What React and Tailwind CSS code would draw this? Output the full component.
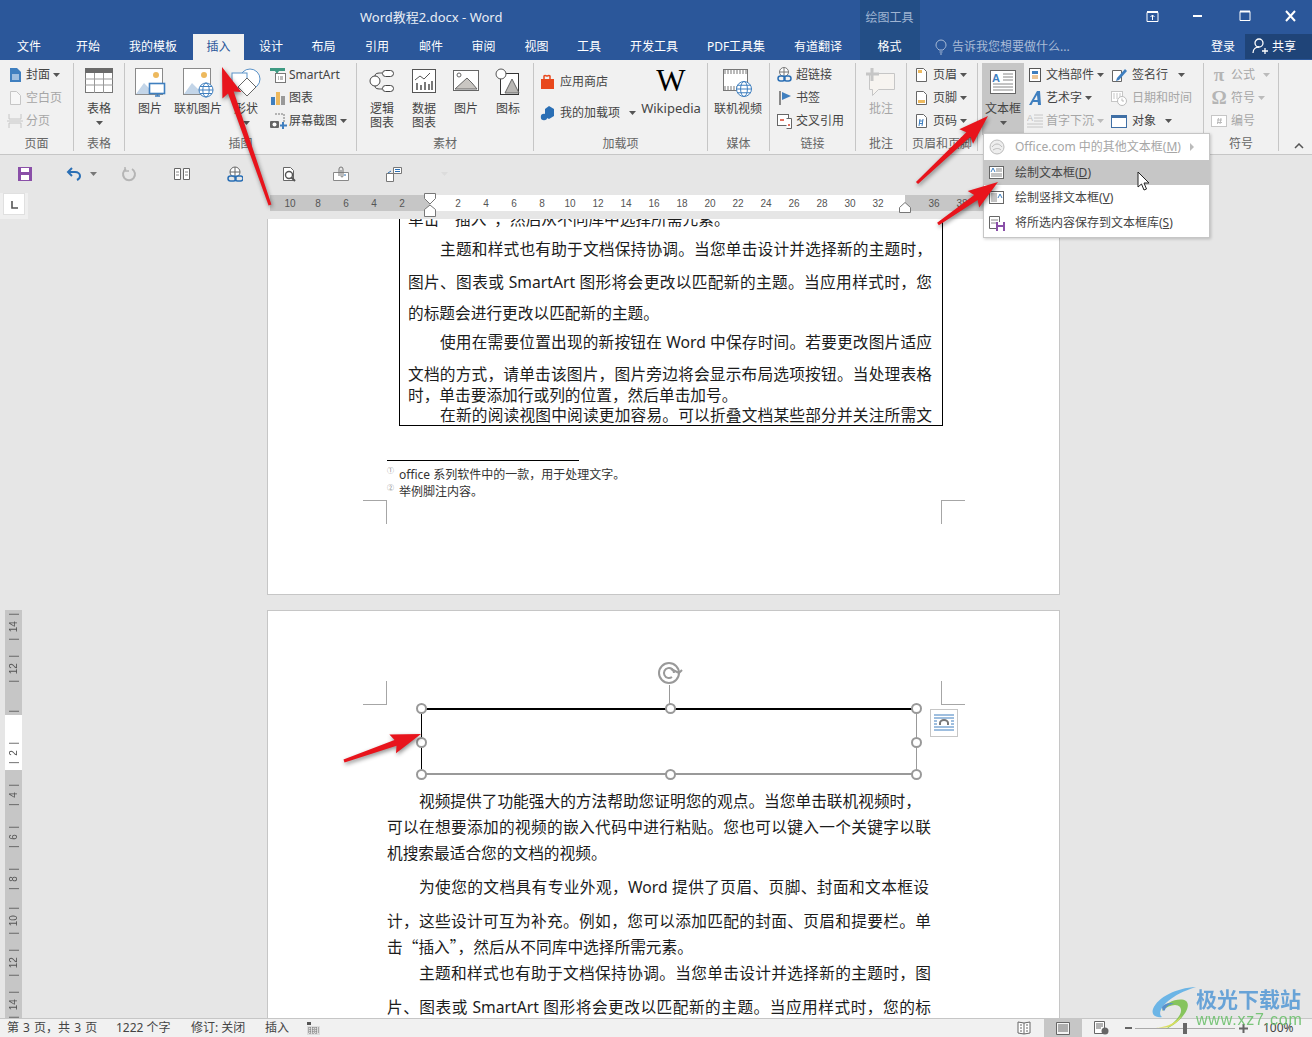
import React from "react";

const Ic = ({ w = 16, h = 16, children, className = "" }) => (
  <svg width={w} height={h} viewBox={`0 0 ${w} ${h}`} fill="none" className={`block shrink-0 ${className}`}>
    {children}
  </svg>
);

const Caret = ({ className = "", color = "#555" }) => (
  <svg width="7" height="4" viewBox="0 0 7 4" className={`block shrink-0 ${className}`}>
    <path d="M0 0h7L3.5 4z" fill={color} />
  </svg>
);

const Globe = ({ x, y, r = 7 }) => (
  <g stroke="#3f7fbf" strokeWidth="1" fill="#fff">
    <circle cx={x} cy={y} r={r} />
    <ellipse cx={x} cy={y} rx={r / 2.2} ry={r} fill="none" />
    <path d={`M${x - r} ${y}h${r * 2}M${x - r + 1} ${y - r / 2}h${r * 2 - 2}M${x - r + 1} ${y + r / 2}h${r * 2 - 2}`} />
  </g>
);

const Landscape = () => (
  <g>
    <rect x="0.5" y="0.5" width="27" height="26" fill="#fff" stroke="#8a8a8a" />
    <circle cx="21" cy="7" r="3" fill="#edb95e" />
    <path d="M1 26l8-11 6 6 3-2 6 7z" fill="#c3d5e8" />
  </g>
);

const IconCover = () => (
  <Ic><path d="M3 1h7l4 4v10H3z" fill="#3f7fbf" /><path d="M5 8h7M5 10h7M5 12h7" stroke="#fff" /></Ic>
);
const IconBlank = () => (
  <Ic><path d="M3.5 1.5h6l4 4v9h-10z" stroke="#c6c6c6" fill="#f7f7f7" /></Ic>
);
const IconBreak = () => (
  <Ic w={16}><path d="M2 1v5h12V1M2 15v-5h12v5M0 8h16" stroke="#c6c6c6" /></Ic>
);
const IconTable = () => (
  <Ic w={28} h={25}>
    <rect x="0.5" y="0.5" width="27" height="24" fill="#fff" stroke="#777" />
    <rect x="0" y="0" width="28" height="5" fill="#6a6a6a" />
    <path d="M0 11h28M0 17h28M9.5 5v20M18.5 5v20" stroke="#999" />
  </Ic>
);
const IconPic = () => (
  <Ic w={31} h={30}>
    <Landscape />
    <rect x="14.5" y="15.5" width="15" height="10" fill="#fff" stroke="#3f7fbf" strokeWidth="1.6" />
    <path d="M20 28h5M22.5 26v2" stroke="#3f7fbf" strokeWidth="1.5" />
  </Ic>
);
const IconOnlinePic = () => (
  <Ic w={31} h={30}><Landscape /><Globe x={23} y={22} r={7} /></Ic>
);
const IconShape = () => (
  <Ic w={30} h={30}>
    <circle cx="19" cy="11" r="10" fill="#fff" stroke="#5b93c9" />
    <rect x="1" y="5" width="15" height="15" fill="#fff" stroke="#5b93c9" />
    <path d="M16 10l9 9-9 9-9-9z" fill="#fff" stroke="#666" />
  </Ic>
);
const IconSmartArt = () => (
  <Ic>
    <path d="M0 1h15v3H9l-2 3-2-3H0z" fill="#3e9a82" />
    <rect x="5.5" y="6.5" width="10" height="9" fill="#fff" stroke="#777" />
    <path d="M8 10h1M8 12h1M10 10h3M10 12h3" stroke="#777" />
  </Ic>
);
const IconChart = () => (
  <Ic><path d="M1 7h4v8H1z" fill="#3f7fbf" /><path d="M6 2h4v13H6z" fill="#edb95e" /><path d="M11 6h4v9h-4z" fill="#999" /></Ic>
);
const IconShot = () => (
  <Ic w={17}>
    <path d="M5 1h9v8" stroke="#777" strokeDasharray="2 1" />
    <rect x="0" y="8" width="9" height="7" rx="1" fill="#666" />
    <circle cx="4.5" cy="11.5" r="2" fill="#fff" />
    <path d="M13 9v7M10 12.5h7" stroke="#3f7fbf" strokeWidth="2" />
  </Ic>
);
const IconLogic = () => (
  <Ic w={26} h={26}>
    <circle cx="6" cy="13" r="5" fill="#fff" stroke="#444" />
    <rect x="13.5" y="2.5" width="11" height="6" rx="3" fill="#fff" stroke="#444" />
    <rect x="13.5" y="17.5" width="11" height="6" rx="3" fill="#fff" stroke="#444" />
    <path d="M6 8c0-3 3-3 7-3M6 18c0 3 3 3 7 3" stroke="#444" />
  </Ic>
);
const IconData = () => (
  <Ic w={24} h={26}>
    <rect x="0.5" y="1.5" width="23" height="23" fill="#fff" stroke="#555" />
    <path d="M3 12l5-4 4 3 6-6" stroke="#555" />
    <path d="M5 22v-7M9 22v-5M13 22v-8M17 22v-6M20 22v-9" stroke="#333" strokeWidth="1.3" />
  </Ic>
);
const IconPicture = () => (
  <Ic w={26} h={26}>
    <rect x="0.5" y="2.5" width="25" height="20" fill="#fff" stroke="#666" strokeWidth="1" />
    <circle cx="6" cy="7" r="2" stroke="#666" fill="#fff" />
    <path d="M2 21l12-11 5 5 5 6z" fill="#c9c6c2" stroke="#666" />
  </Ic>
);
const IconSymbol = () => (
  <Ic w={26} h={28}>
    <rect x="5.5" y="5.5" width="18" height="21" fill="#fff" stroke="#333" />
    <circle cx="6" cy="6" r="5" fill="#fff" stroke="#555" />
    <path d="M17 11l7 14H10z" fill="#b9b7b4" stroke="#666" />
  </Ic>
);
const IconStore = () => (
  <Ic>
    <path d="M1 5h13v10H1z" fill="#e8481c" />
    <path d="M4 5V2c1-1 2 0 3 0s2-1 3 0v3" stroke="#e8481c" strokeWidth="1.5" />
  </Ic>
);
const IconAddin = () => (
  <Ic>
    <path d="M9 1l5 3v7l-5 3-4-2V4z" fill="#2a6fb5" />
    <circle cx="4" cy="12" r="3.2" fill="#2a6fb5" />
  </Ic>
);
const IconVideo = () => (
  <Ic w={30} h={30}>
    <rect x="0.5" y="1.5" width="24" height="21" fill="#fff" stroke="#777" />
    <path d="M1 3h23M1 5h23M1 19h23M1 21h23" stroke="#777" strokeDasharray="2 1" />
    <Globe x={21} y={21} r={7.5} />
  </Ic>
);
const IconLink = () => (
  <Ic>
    <circle cx="7" cy="5" r="4.5" fill="#fff" stroke="#777" />
    <path d="M3 5h8M7 1v8" stroke="#777" />
    <rect x="1" y="9" width="7" height="5" rx="2.5" stroke="#2a6fb5" strokeWidth="1.5" />
    <rect x="7" y="9" width="7" height="5" rx="2.5" stroke="#2a6fb5" strokeWidth="1.5" />
  </Ic>
);
const IconBookmark = () => (
  <Ic><path d="M3 1v14" stroke="#666" strokeWidth="1.5" /><path d="M5 2l9 4-9 4z" fill="#3f7fbf" /></Ic>
);
const IconCross = () => (
  <Ic>
    <rect x="0.5" y="1.5" width="11" height="11" fill="#fff" stroke="#666" />
    <path d="M3 7h4" stroke="#d9432c" strokeWidth="1.5" />
    <path d="M9.5 5.5h5v10h-5" fill="#fff" stroke="#666" />
    <path d="M11 12h2" stroke="#d9432c" strokeWidth="1.5" />
  </Ic>
);
const IconComment = () => (
  <Ic w={30} h={30}>
    <path d="M3.5 5.5h25v16h-16l-6 6v-6h-3z" fill="#f7f4f0" stroke="#c6c6c6" />
    <path d="M6 0v13M0 6h13" stroke="#c6c6c6" strokeWidth="3" />
  </Ic>
);
const IconHeader = () => (
  <Ic><path d="M3.5 1.5h7l3 3v10h-10z" fill="#fff" stroke="#666" /><path d="M5 3h4v3H5z" fill="#edb95e" /></Ic>
);
const IconFooter = () => (
  <Ic><path d="M3.5 1.5h7l3 3v10h-10z" fill="#fff" stroke="#666" /><path d="M5 10h7v3H5z" fill="#edb95e" /></Ic>
);
const IconPageNo = () => (
  <Ic>
    <path d="M3.5 1.5h7l3 3v10h-10z" fill="#fff" stroke="#666" />
    <path d="M6 8h4M6 10.5h4M7 6l-1 7M10 6l-1 7" stroke="#3f7fbf" />
  </Ic>
);
const IconTextbox = () => (
  <Ic w={30} h={28}>
    <rect x="2.5" y="2.5" width="25" height="23" fill="#fff" stroke="#666" />
    <path d="M15 6h10M15 9h10M15 12h10M5 16h20M5 19h20M5 22h20" stroke="#888" />
    <text x="4" y="14" fontSize="11" fontWeight="700" fill="#3f7fbf" fontFamily="Liberation Sans">A</text>
  </Ic>
);
const IconParts = () => (
  <Ic>
    <rect x="2.5" y="1.5" width="11" height="13" fill="#fff" stroke="#555" />
    <rect x="5" y="4" width="6" height="3" fill="#3f7fbf" />
    <path d="M5 9h6M5 11h6" stroke="#d88b2f" />
  </Ic>
);
const IconWordArt = () => (
  <Ic><path d="M2 15L10 1h3l1 14h-3l-.3-3H6l-1.5 3zM7 10h3.5L10 5z" fill="#3f7fbf" /></Ic>
);
const IconDropCap = () => (
  <Ic>
    <text x="0" y="8" fontSize="9" fill="#bbb" fontFamily="Liberation Sans">A</text>
    <path d="M7 2h9M7 5h9M7 8h9M0 11h16M0 14h16" stroke="#c6c6c6" />
  </Ic>
);
const IconSign = () => (
  <Ic>
    <path d="M1.5 3.5h9v11h-9z" fill="#fff" stroke="#666" />
    <path d="M6 11l8-9 2 2-8 9-3 1z" fill="#3f7fbf" />
  </Ic>
);
const IconDate = () => (
  <Ic>
    <rect x="0.5" y="1.5" width="11" height="10" fill="#fff" stroke="#c6c6c6" />
    <path d="M2 4h8M2 6h8M2 8h8" stroke="#c6c6c6" strokeDasharray="2 1" />
    <circle cx="11" cy="11" r="4.5" fill="#fff" stroke="#bbb" />
    <path d="M11 8.5V11h2" stroke="#bbb" />
  </Ic>
);
const IconObject = () => (
  <Ic><rect x="0.5" y="2.5" width="15" height="12" fill="#fff" stroke="#3f6fa5" /><path d="M0 2h16v3H0z" fill="#3f6fa5" /></Ic>
);
const IconNumber = () => (
  <Ic><rect x="0.5" y="2.5" width="15" height="11" fill="#fff" stroke="#c6c6c6" /><path d="M6 7h5M6 9.5h5M7.5 5L6.5 11M10 5L9 11" stroke="#bbb" /></Ic>
);
const Glyph = ({ children }) => (
  <span className="block w-4 text-center text-[19px] leading-4 font-bold text-[#b5b5b5] font-['Liberation_Serif',serif]">{children}</span>
);

const Group = ({ w, label, children }) => (
  <div className={`${w} mt-[3px] h-[88px] shrink-0 flex flex-col border-r border-[#c6c6c6]`}>
    <div className="h-[72px] flex">{children}</div>
    <div className="h-[16px] leading-[18px] text-center text-[12px] text-[#666]">{label}</div>
  </div>
);

const Large = ({ icon, lines, caret, w, off }) => (
  <div className={`${w} shrink-0 flex flex-col items-center pt-[5px] ${off ? "text-[#a6a6a6]" : "text-[#444]"}`}>
    <div className="h-[30px] flex items-start justify-center">{icon}</div>
    <div className="mt-[4px] text-center text-[12px] leading-[14px] whitespace-nowrap">
      {lines.map((l) => <div key={l}>{l}</div>)}
    </div>
    {caret && <div className="h-[13px] flex items-center"><Caret /></div>}
  </div>
);

const Row = ({ icon, label, pad, gap = "ml-[3px]", caret, off, h = "h-[23px]" }) => (
  <div className={`${h} ${pad} flex items-center whitespace-nowrap text-[12px] ${off ? "text-[#a6a6a6]" : "text-[#444]"}`}>
    {icon}
    <span className={gap}>{label}</span>
    {caret && <Caret className={caret} color={off ? "#bbb" : "#555"} />}
  </div>
);

const tabs = [
  ["文件", "w-[58px]"], ["开始", "w-[60px]"], ["我的模板", "w-[75px] pr-[5px]"], ["插入", "w-[51px]"], ["设计", "w-[54px]"],
  ["布局", "w-[52px] pr-[1px]"], ["引用", "w-[54px]"], ["邮件", "w-[54px]"], ["审阅", "w-[52px] pr-[1px]"], ["视图", "w-[53px]"],
  ["工具", "w-[53px] pr-[1px]"], ["开发工具", "w-[77px] pr-[1px]"], ["PDF工具集", "w-[87px] pr-[1px]"], ["有道翻译", "w-[80px] pr-[4px]"],
];

const HeaderBar = () => (
  <div className="h-[60px] shrink-0 bg-[#2b579a] flex text-white">
    <div className="w-[860px] shrink-0 flex flex-col">
      <div className="h-[34px] pl-[360px] pt-[8px] text-[13px] leading-[18px] text-[#e8edf5] whitespace-nowrap">Word教程2.docx - Word</div>
      <div className="h-[26px] flex text-[12px] leading-[26px] text-center">
        {tabs.map(([t, w]) => (
          <div key={t} className={`${w} shrink-0 whitespace-nowrap ${t === "插入" ? "bg-[#f1f1f1] text-[#2b579a]" : ""}`}>{t}</div>
        ))}
      </div>
    </div>
    <div className="w-[60px] shrink-0 bg-[#234e86] flex flex-col text-center">
      <div className="h-[34px] pt-[9px] pr-[1px] text-[12px] leading-[18px] text-[#9fb4d2]">绘图工具</div>
      <div className="h-[26px] pr-[1px] text-[12px] leading-[26px]">格式</div>
    </div>
    <div className="flex-1 flex flex-col">
      <div className="h-[34px] flex items-start pt-[8px]">
        <svg width="16" height="16" viewBox="0 0 16 16" className="ml-[224px] block shrink-0" fill="none" stroke="#fff">
          <path d="M3 4.5h11v9H3zM8.5 12V7M6.5 9l2-2 2 2" strokeWidth="1" />
          <path d="M3 4h11" strokeWidth="2" />
        </svg>
        <svg width="10" height="16" viewBox="0 0 10 16" className="ml-[33px] block shrink-0"><path d="M0 8h9" stroke="#fff" strokeWidth="2" /></svg>
        <svg width="12" height="16" viewBox="0 0 12 16" className="ml-[36px] block shrink-0" fill="none" stroke="#fff"><path d="M1 3.5h10v9H1z" /><path d="M1 3.5h10" strokeWidth="2" /></svg>
        <svg width="12" height="16" viewBox="0 0 12 16" className="ml-[34px] block shrink-0" stroke="#fff" strokeWidth="2"><path d="M1 3l9 10M10 3l-9 10" /></svg>
      </div>
      <div className="h-[26px] flex items-center text-[12px]">
        <svg width="12" height="16" viewBox="0 0 12 16" className="ml-[15px] block shrink-0" fill="none" stroke="#a9bbd6"><path d="M4 11C2 9 1 8 1 6a5 5 0 0 1 10 0c0 2-1 3-3 5zM4.5 13h3M5 15h2" /></svg>
        <span className="ml-[5px] w-[271px] shrink-0 text-[#a9bbd6] whitespace-nowrap">告诉我您想要做什么...</span>
      </div>
    </div>
  </div>
);

const Ribbon = () => (
  <div className="h-[95px] shrink-0 bg-[#f1f1f1] border-b border-[#c6c6c6] flex">
    <Group w="w-[74px]" label="页面">
      <div>
        <Row icon={<IconCover />} label="封面" pad="pl-[7px]" caret="ml-[3px]" />
        <Row icon={<IconBlank />} label="空白页" pad="pl-[7px]" off />
        <Row icon={<IconBreak />} label="分页" pad="pl-[7px]" off />
      </div>
    </Group>
    <Group w="w-[51px]" label="表格">
      <Large w="w-full" icon={<IconTable />} lines={["表格"]} caret />
    </Group>
    <Group w="w-[232px]" label="插图">
      <div className="pl-[1px] flex">
        <Large w="w-[48px]" icon={<IconPic />} lines={["图片"]} />
        <Large w="w-[48px]" icon={<IconOnlinePic />} lines={["联机图片"]} />
        <Large w="w-[48px]" icon={<IconShape />} lines={["形状"]} caret />
        <div>
          <Row icon={<IconSmartArt />} label="SmartArt" />
          <Row icon={<IconChart />} label="图表" />
          <Row icon={<IconShot />} label="屏幕截图" caret="ml-[3px]" gap="ml-[2px]" />
        </div>
      </div>
    </Group>
    <Group w="w-[177px]" label="素材">
      <Large w="w-[50px]" icon={<IconLogic />} lines={["逻辑", "图表"]} />
      <Large w="w-[34px]" icon={<IconData />} lines={["数据", "图表"]} />
      <div className="w-[4px]" />
      <Large w="w-[42px]" icon={<IconPicture />} lines={["图片"]} />
      <Large w="w-[42px]" icon={<IconSymbol />} lines={["图标"]} />
    </Group>
    <Group w="w-[174px]" label="加载项">
      <div className="w-[103px] pt-[4px] shrink-0">
        <Row h="h-[30px]" icon={<IconStore />} label="应用商店" pad="pl-[6px]" gap="ml-[4px]" />
        <Row h="h-[32px]" icon={<IconAddin />} label="我的加载项" pad="pl-[6px]" gap="ml-[4px]" caret="ml-[9px]" />
      </div>
      <div className="w-[68px] shrink-0 flex flex-col items-center text-[#444]">
        <div className="h-[35px] pt-[1px] text-[31px] leading-[34px] text-black font-['Liberation_Serif',serif]">W</div>
        <div className="text-[13px] leading-[20px]">Wikipedia</div>
      </div>
    </Group>
    <Group w="w-[62px]" label="媒体">
      <Large w="w-[60px]" icon={<IconVideo />} lines={["联机视频"]} />
    </Group>
    <Group w="w-[86px]" label="链接">
      <div>
        <Row icon={<IconLink />} label="超链接" pad="pl-[7px]" />
        <Row icon={<IconBookmark />} label="书签" pad="pl-[7px]" />
        <Row icon={<IconCross />} label="交叉引用" pad="pl-[7px]" />
      </div>
    </Group>
    <Group w="w-[51px]" label="批注">
      <Large w="w-full" icon={<IconComment />} lines={["批注"]} off />
    </Group>
    <Group w="w-[71px]" label="页眉和页脚">
      <div>
        <Row icon={<IconHeader />} label="页眉" pad="pl-[6px]" gap="ml-[4px]" caret="ml-[3px]" />
        <Row icon={<IconFooter />} label="页脚" pad="pl-[6px]" gap="ml-[4px]" caret="ml-[3px]" />
        <Row icon={<IconPageNo />} label="页码" pad="pl-[6px]" gap="ml-[4px]" caret="ml-[3px]" />
      </div>
    </Group>
    <Group w="w-[226px]" label="文本">
      <div className="ml-[4px] w-[42px] h-[72px] shrink-0 bg-[#c6c6c6]">
        <Large w="w-full" icon={<IconTextbox />} lines={["文本框"]} caret />
      </div>
      <div className="w-[87px] shrink-0">
        <Row icon={<IconParts />} label="文档部件" pad="pl-[3px]" caret="ml-[3px]" />
        <Row icon={<IconWordArt />} label="艺术字" pad="pl-[3px]" caret="ml-[3px]" />
        <Row icon={<IconDropCap />} label="首字下沉" pad="pl-[3px]" caret="ml-[3px]" off />
      </div>
      <div>
        <Row icon={<IconSign />} label="签名行" gap="ml-[5px]" caret="ml-[10px]" />
        <Row icon={<IconDate />} label="日期和时间" gap="ml-[5px]" off />
        <Row icon={<IconObject />} label="对象" gap="ml-[5px]" caret="ml-[9px]" />
      </div>
    </Group>
    <Group w="w-[75px]" label="符号">
      <div>
        <Row icon={<Glyph>π</Glyph>} label="公式" pad="pl-[7px]" gap="ml-[4px]" caret="ml-[8px]" off />
        <Row icon={<Glyph>Ω</Glyph>} label="符号" pad="pl-[7px]" gap="ml-[4px]" caret="ml-[3px]" off />
        <Row icon={<IconNumber />} label="编号" pad="pl-[7px]" gap="ml-[4px]" off />
      </div>
    </Group>
    <div className="flex-1 flex items-end justify-center pb-[5px] pl-[7px]">
      <svg width="10" height="6" viewBox="0 0 10 6" className="block" fill="none" stroke="#555" strokeWidth="1.5"><path d="M1 5l4-4 4 4" /></svg>
    </div>
  </div>
);

const QuickBar = () => (
  <div className="h-[38px] shrink-0 bg-[#e6e6e6] flex items-center pl-[17px]">
    <Ic><path d="M1 1h14v14H1z" fill="#8a4fa8" /><path d="M4 2h8v4H4zM4 9h8v5H4z" fill="#fff" /></Ic>
    <Ic className="ml-[33px]"><path d="M6 2L2 6l4 4" stroke="#2a6fb5" strokeWidth="2" /><path d="M3 6h6c3 0 5 2 5 4s-1 3-3 4" stroke="#2a6fb5" strokeWidth="2" /></Ic>
    <Caret className="ml-[8px]" color="#777" />
    <Ic className="ml-[24px]"><path d="M11 3a6 6 0 1 1-6 0" stroke="#b5b5b5" strokeWidth="2" /><path d="M4 1v4h4" stroke="#b5b5b5" strokeWidth="1.5" /></Ic>
    <Ic className="ml-[37px]"><path d="M0.5 2.5h6v11h-6zM9.5 2.5h6v11h-6z" stroke="#666" fill="#fff" /><path d="M2 6h3M2 9h3M11 6h3M11 9h3" stroke="#888" /></Ic>
    <Ic className="ml-[37px]"><circle cx="8" cy="6" r="5" fill="#fff" stroke="#666" /><path d="M3 6h10M8 1v10" stroke="#666" /><rect x="1" y="10" width="8" height="5" rx="2.5" stroke="#2a6fb5" strokeWidth="1.5" /><rect x="8" y="10" width="8" height="5" rx="2.5" stroke="#2a6fb5" strokeWidth="1.5" /></Ic>
    <Ic className="ml-[38px]"><path d="M2.5 1.5h7l3 3v10h-10z" fill="#fff" stroke="#666" /><circle cx="8" cy="9" r="3.5" fill="#fff" stroke="#555" strokeWidth="1.4" /><path d="M10.5 11.5L14 15" stroke="#555" strokeWidth="2" /></Ic>
    <Ic className="ml-[36px]"><path d="M0.5 6.5h15v8h-15z" fill="#fff" stroke="#888" /><path d="M6 10V3a2 2 0 0 1 4 0v7a1 1 0 0 1-2 0V4" stroke="#777" /><path d="M11 9h2" stroke="#2a6fb5" /></Ic>
    <Ic className="ml-[37px]"><path d="M0.5 7.5h7v8h-7z" fill="#fff" stroke="#777" /><path d="M7.5 1.5h8v6h-8z" fill="#fff" stroke="#777" /><path d="M2 7l3-2M9 3.5h5M9 5.5h5" stroke="#2a6fb5" /></Ic>
    <Caret className="ml-[39px]" color="#dcdcdc" />
  </div>
);

const RulerNums = ({ nums, className }) => (
  <div className={`h-full flex ${className}`}>
    {nums.map((n) => <div key={n} className="w-[28px] text-center">{n}</div>)}
  </div>
);

const TopRuler = () => (
  <div className="h-[26px] shrink-0 bg-[#e6e6e6] flex">
    <div className="w-[28px] h-[26px] shrink-0 bg-[#efefef] pl-[3px]">
      <div className="w-[22px] h-[22px] bg-white flex items-center justify-center border border-[#e0e0e0]">
        <svg width="8" height="8" viewBox="0 0 8 8" className="block translate-x-[1px] translate-y-[1px]"><path d="M1 0v7h6" fill="none" stroke="#555" strokeWidth="1.6" /></svg>
      </div>
    </div>
    <div className="ml-[242px] mt-[2px] h-[16px] relative flex text-[10px] leading-[17px] text-[#555] font-['Liberation_Sans',sans-serif]">
      <RulerNums nums={[10, 8, 6, 4, 2]} className="w-[160px] pl-[6px] bg-[#c6c6c6]" />
      <RulerNums nums={[2, 4, 6, 8, 10, 12, 14, 16, 18, 20, 22, 24, 26, 28, 30, 32]} className="w-[475px] pl-[14px] bg-white" />
      <RulerNums nums={[36, 38]} className="w-[154px] pl-[15px] bg-[#c6c6c6]" />
      <svg width="12" height="24" viewBox="0 0 12 24" className="absolute left-[154px] -top-[2px] block">
        <path d="M.5.5h11v5L6 11 .5 5.5zM.5 23.5v-7L6 12l5.5 4.5v7z" fill="#fff" stroke="#777" />
      </svg>
      <svg width="12" height="11" viewBox="0 0 12 11" className="absolute left-[629px] top-[7px] block">
        <path d="M.5 10.5v-5L6 .5l5.5 5v5z" fill="#fff" stroke="#777" />
      </svg>
    </div>
  </div>
);

const vNums = [14, 12, "", 2, 4, 6, 8, 10, 12, 14];

const SideRuler = () => (
  <div className="w-[267px] shrink-0 pl-[5px] pt-[391px]">
    <div className="w-[17px] h-[408px] bg-[#c6c6c6] relative overflow-hidden">
      <div className="absolute left-0 top-[105px] w-[17px] h-[55px] bg-white" />
      <div className="relative -mt-[4px] text-[10px] text-[#555] font-['Liberation_Sans',sans-serif]">
        {vNums.map((n, i) => (
          <div key={i} className="h-[42px] flex items-center justify-center">
            <span className="[writing-mode:vertical-rl] rotate-180 leading-[17px] whitespace-pre">{n === "" ? "|" : `|  ${n}  |`}</span>
          </div>
        ))}
      </div>
    </div>
  </div>
);

// one text line of the document, fixed height because Word's spacing is uneven here
const Line = ({ h, lh, indent, just, children }) => (
  <div
    className={`${h} ${lh} ${indent ? "pl-[32px]" : ""} ${just ? "[text-align-last:justify]" : ""} whitespace-nowrap`}
  >
    {children}
  </div>
);

const Crop = ({ side, edge }) => (
  <div className={`w-[24px] h-[24px] border-[#a6a6a6] ${side} ${edge}`} />
);

// curly quotes must come from the CJK face to get their wide form
const Q = ({ children }) => (
  <span className="font-['Noto_Sans_CJK_SC',sans-serif]">{children}</span>
);

const handles = [
  "-left-[6px] -top-[7px]", "left-[243px] -top-[7px]", "-right-[6px] -top-[7px]",
  "-left-[6px] top-[27px]", "-right-[6px] top-[27px]",
  "-left-[6px] -bottom-[7px]", "left-[243px] -bottom-[7px]", "-right-[6px] -bottom-[7px]",
];

const Shape = () => (
  <div className="ml-[153px] mt-[3px] w-[496px] h-[67px] relative border-t-2 border-l border-t-black border-l-black border-r border-b-2 border-r-[#999] border-b-[#999]">
    <div className="absolute left-[247px] -top-[25px] w-[1px] h-[25px] bg-[#999]" />
    <svg width="26" height="24" viewBox="0 0 26 24" fill="none" stroke="#999" strokeWidth="2" className="absolute left-[235px] -top-[49px] block">
      <circle cx="12" cy="12" r="10" />
      <path d="M17 12a5 5 0 1 0-2 4" />
      <path d="M14 8l8 4 3-3" />
    </svg>
    {handles.map((p) => (
      <div key={p} className={`absolute ${p} w-[11px] h-[11px] rounded-full bg-white border-2 border-[#999]`} />
    ))}
    <div className="absolute left-[508px] -top-[1px] w-[28px] h-[28px] bg-white border border-[#c6c6c6] flex items-center justify-center">
      <svg width="20" height="20" viewBox="0 0 20 20" fill="none" className="block">
        <path d="M0 2h20M0 5h20M0 8h3M17 8h3M0 11h3M17 11h3M0 14h20M0 17h20" stroke="#3f7fbf" />
        <path d="M5 12V10a5 4 0 0 1 10 0v2h-2v-2a3 2 0 0 0-6 0v2z" fill="#777" />
      </svg>
    </div>
  </div>
);

const Pages = () => (
  <div className="w-[793px] shrink-0 h-full overflow-hidden text-[15.7px] text-[#1c1c1c]">
    <div className="h-[376px] bg-white border border-t-0 border-[#c6c6c6] overflow-hidden">
      <div className="ml-[131px] -mt-[16px] w-[544px] h-[223px] border-x border-b border-black pl-[8px] pr-[10px] overflow-hidden">
        <Line h="h-[31px]" lh="leading-[31px]">单击<Q>“</Q>插入<Q>”</Q>，然后从不同库中选择所需元素。</Line>
        <Line h="h-[31px]" lh="leading-[31px]" indent just>主题和样式也有助于文档保持协调。当您单击设计并选择新的主题时，</Line>
        <Line h="h-[34px]" lh="leading-[34px]" just>图片、图表或 SmartArt 图形将会更改以匹配新的主题。当应用样式时，您</Line>
        <Line h="h-[28px]" lh="leading-[28px]">的标题会进行更改以匹配新的主题。</Line>
        <Line h="h-[31px]" lh="leading-[31px]" indent just>使用在需要位置出现的新按钮在 Word 中保存时间。若要更改图片适应</Line>
        <Line h="h-[32px]" lh="leading-[32px]" just>文档的方式，请单击该图片，图片旁边将会显示布局选项按钮。当处理表格</Line>
        <Line h="h-[10px]" lh="leading-[10px]">时，单击要添加行或列的位置，然后单击加号。</Line>
        <Line h="h-[25px]" lh="leading-[30px] overflow-hidden" indent just>在新的阅读视图中阅读更加容易。可以折叠文档某些部分并关注所需文</Line>
      </div>
      <div className="ml-[119px] mt-[34px] w-[192px] h-[1px] bg-black" />
      <div className="ml-[119px] mt-[5px] text-[12px] leading-[17px] text-[#333]">
        <div className="flex"><span className="w-[12px] text-[7px] leading-[10px] text-[#888]">①</span><span>office 系列软件中的一款，用于处理文字。</span></div>
        <div className="flex"><span className="w-[12px] text-[7px] leading-[10px] text-[#888]">②</span><span>举例脚注内容。</span></div>
      </div>
      <div className="ml-[95px] w-[602px] flex justify-between">
        <Crop side="border-t" edge="border-r" />
        <Crop side="border-t" edge="border-l" />
      </div>
    </div>
    <div className="h-[15px]" />
    <div className="h-[500px] bg-white border border-[#c6c6c6]">
      <div className="ml-[95px] mt-[70px] w-[602px] flex justify-between">
        <Crop side="border-b" edge="border-r" />
        <Crop side="border-b" edge="border-l" />
      </div>
      <Shape />
      <div className="ml-[119px] mt-[13px] w-[544px]">
        <Line h="h-[26px]" lh="leading-[26px]"><span className="inline-block w-[534px] pl-[32px] [text-align-last:justify]">视频提供了功能强大的方法帮助您证明您的观点。当您单击联机视频时，</span></Line>
        <Line h="h-[26px]" lh="leading-[26px]" just>可以在想要添加的视频的嵌入代码中进行粘贴。您也可以键入一个关键字以联</Line>
        <Line h="h-[26px]" lh="leading-[26px]">机搜索最适合您的文档的视频。</Line>
        <Line h="h-[42px]" lh="leading-[42px]"><span className="inline-block w-[542px] pl-[32px] [text-align-last:justify]">为使您的文档具有专业外观，Word 提供了页眉、页脚、封面和文本框设</span></Line>
        <Line h="h-[26px]" lh="leading-[26px]" just>计，这些设计可互为补充。例如，您可以添加匹配的封面、页眉和提要栏。单</Line>
        <Line h="h-[26px]" lh="leading-[26px]">击<Q>“</Q>插入<Q>”</Q>，然后从不同库中选择所需元素。</Line>
        <Line h="h-[26px]" lh="leading-[26px]" indent just>主题和样式也有助于文档保持协调。当您单击设计并选择新的主题时，图</Line>
        <Line h="h-[42px]" lh="leading-[42px]" just>片、图表或 SmartArt 图形将会更改以匹配新的主题。当应用样式时，您的标</Line>
      </div>
    </div>
  </div>
);

const StatusBar = () => (
  <div className="h-[19px] shrink-0 bg-[#f1f1f1] border-t border-[#c6c6c6] flex items-center text-[12px] text-[#444] whitespace-nowrap">
    <span className="ml-[7px] w-[109px] shrink-0 [word-spacing:1px]">第 3 页，共 3 页</span>
    <span className="w-[75px] shrink-0">1222 个字</span>
    <span className="w-[74px] shrink-0">修订: 关闭</span>
    <span className="w-[42px] shrink-0">插入</span>
    <Ic w={13} h={13}><path d="M0 0h4v3H0z" fill="#555" /><path d="M0 4h13v9H0z" fill="#ddd" /><path d="M1 6h11M1 8h11M1 10h11M3 5v7M6 5v7M9 5v7" stroke="#777" strokeDasharray="1 1" /></Ic>
    <Ic className="ml-[697px]" w={14} h={14}><path d="M7 2L1 1v11l6 1 6-1V1zM7 2v11M3 4h2M3 7h2M3 10h2M9 4h2M9 7h2M9 10h2" stroke="#666" fill="#fff" /></Ic>
    <div className="ml-[13px] w-[38px] h-[18px] bg-[#c6c6c6] flex items-center justify-center">
      <Ic w={14} h={13}><path d="M.5.5h13v12H.5z" fill="#f4f4f4" stroke="#666" /><path d="M2 3h10M2 5h10M2 7h10M2 9h10" stroke="#666" /></Ic>
    </div>
    <Ic className="ml-[12px]" w={15} h={14}><path d="M.5.5h10v12H.5z" fill="#fff" stroke="#666" /><path d="M2 3h7M2 5h7M2 7h5" stroke="#666" /><circle cx="11" cy="10" r="3.5" fill="#666" /></Ic>
    <div className="ml-[16px] w-[7px] h-[2px] bg-[#666]" />
    <div className="ml-[3px] w-[100px] h-[14px] flex items-center relative">
      <div className="w-full h-[1px] bg-[#aaa]" />
      <div className="absolute left-[48px] w-[4px] h-[11px] bg-[#666]" />
    </div>
    <Ic className="ml-[4px]" w={9} h={9}><path d="M4.5 0v9M0 4.5h9" stroke="#666" strokeWidth="2" /></Ic>
    <span className="ml-[15px]">100%</span>
  </div>
);

const Menu = () => (
  <div className="absolute left-[983px] top-[133px] w-[227px] h-[105px] bg-white border border-[#c6c6c6] shadow-[1px_1px_3px_rgba(0,0,0,0.2)] text-[12px] text-[#444] whitespace-nowrap">
    <div className="h-[26px] flex items-center text-[#a6a6a6]">
      <Ic className="ml-[5px]"><circle cx="8" cy="8" r="7" fill="#eee" stroke="#bbb" /><path d="M3 8c3-4 7-4 10 0M4 11c3-2 6-2 8 0" stroke="#bbb" /></Ic>
      <span className="ml-[10px]">Office.com 中的其他文本框(<u>M</u>)</span>
      <svg width="4" height="8" viewBox="0 0 4 8" className="ml-[9px] block"><path d="M0 0l4 4-4 4z" fill="#bbb" /></svg>
    </div>
    <div className="h-[25px] bg-[#c6c6c6] flex items-center">
      <Ic className="ml-[5px]"><rect x="0.5" y="1.5" width="14" height="12" fill="#fff" stroke="#666" /><path d="M7 4h6M7 6h6M2 9h11M2 11h11" stroke="#888" /><path d="M2 7l2-4 2 4" stroke="#3f7fbf" /></Ic>
      <span className="ml-[10px]">绘制文本框(<u>D</u>)</span>
    </div>
    <div className="h-[25px] flex items-center">
      <Ic className="ml-[5px]"><rect x="0.5" y="1.5" width="14" height="12" fill="#fff" stroke="#666" /><path d="M3 3v9M5 3v9M7 3v9" stroke="#888" /><path d="M9 8l2-4 2 4" stroke="#3f7fbf" /></Ic>
      <span className="ml-[10px]">绘制竖排文本框(<u>V</u>)</span>
    </div>
    <div className="h-[25px] flex items-center">
      <Ic className="ml-[5px]"><path d="M.5 1.5h10v12H.5z" fill="#fff" stroke="#666" /><path d="M2 5h7M2 8h5" stroke="#888" /><path d="M7 7h9v9H7z" fill="#8a4fa8" /><path d="M9 7h5v3H9zM9 12h5v4H9z" fill="#fff" /></Ic>
      <span className="ml-[10px]">将所选内容保存到文本框库(<u>S</u>)</span>
    </div>
  </div>
);

// red callout arrow, polygon worked out from tail and tip
const arrowPoints = (x1, y1, x2, y2) => {
  const len = Math.hypot(x2 - x1, y2 - y1);
  const ux = (x2 - x1) / len;
  const uy = (y2 - y1) / len;
  const nx = -uy;
  const ny = ux;
  const at = (d, s) => `${x1 + ux * d + nx * s},${y1 + uy * d + ny * s}`;
  const b = len - 24;
  return [at(0, -1.5), at(b - 3, -3), at(b - 6, -10), at(len, 0), at(b - 6, 10), at(b - 3, 3), at(0, 1.5)].join(" ");
};

const arrows = [
  [270, 205, 222, 67],
  [917, 183, 988, 116],
  [938, 224, 998, 182],
  [344, 761, 421, 734],
];

const Overlay = () => (
  <svg width="1312" height="1037" viewBox="0 0 1312 1037" className="absolute left-0 top-0 block pointer-events-none">
    <g className="drop-shadow-[1px_2px_2px_rgba(0,0,0,0.45)]">
      {arrows.map(([a, b, c, d]) => <polygon key={a} points={arrowPoints(a, b, c, d)} fill="#e8141c" />)}
    </g>
    <path d="M1138 172v15l3.5-3 2.5 6 2.5-1-2.5-6h5z" fill="#fff" stroke="#222" />
  </svg>
);

const Watermark = () => (
  <div className="absolute left-[1150px] top-[985px] w-[160px] h-[48px] pointer-events-none blur-[0.4px]">
    <svg width="50" height="46" viewBox="0 0 50 46" className="absolute left-0 top-0 block opacity-90" fill="none">
      <path d="M46 2C26 3 8 12 3 24c-2 6 3 9 9 8C6 28 14 12 46 2z" fill="#5fb0e6" />
      <path d="M12 26c2-9 18-14 24-10 6 5-3 20-20 28 10-8 18-16 14-22-3-4-12-2-18 4z" fill="#7cc04e" />
      <path d="M6 42c10 1 20-4 26-12-4 8-12 15-26 12z" fill="#d8dc4e" />
      <path d="M12 22c3-4 9-5 12-3-4 0-8 2-9 6-1 2-3 0-3-3z" fill="#4a86c8" />
    </svg>
    <div className="absolute left-[46px] top-[1px] text-[21px] leading-[26px] font-bold text-[#5a9bd5]/90 whitespace-nowrap">极光下载站</div>
    <div className="absolute left-[46px] top-[26px] text-[16px] leading-[18px] tracking-[0.8px] text-[#6cc06c]/90 whitespace-nowrap font-['Liberation_Sans',sans-serif]">www.xz7.com</div>
  </div>
);

const App = () => (
  <div className="relative w-[1312px] h-[1037px] overflow-hidden flex flex-col bg-[#e6e6e6] font-['Noto_Sans','Noto_Sans_CJK_SC',sans-serif]">
    <HeaderBar />
    <Ribbon />
    <QuickBar />
    <TopRuler />
    <div className="flex-1 min-h-0 flex overflow-hidden">
      <SideRuler />
      <Pages />
    </div>
    <StatusBar />
    <div className="absolute left-[1211px] top-[34px] w-[35px] h-[26px] text-[12px] leading-[26px] text-white">登录</div>
    <div className="absolute left-[1245px] top-[34px] w-[67px] h-[25px] bg-[#1f4478] flex items-center text-[12px] text-white">
      <svg width="16" height="17" viewBox="0 0 16 17" className="ml-[7px] block" fill="none" stroke="#fff" strokeWidth="1.3">
        <circle cx="7" cy="5" r="4" /><path d="M1 15c0-4 3-6 6-6M10 13h6M13 10v6" />
      </svg>
      <span className="ml-[4px]">共享</span>
    </div>
    <Menu />
    <Watermark />
    <Overlay />
  </div>
);

export default App;
